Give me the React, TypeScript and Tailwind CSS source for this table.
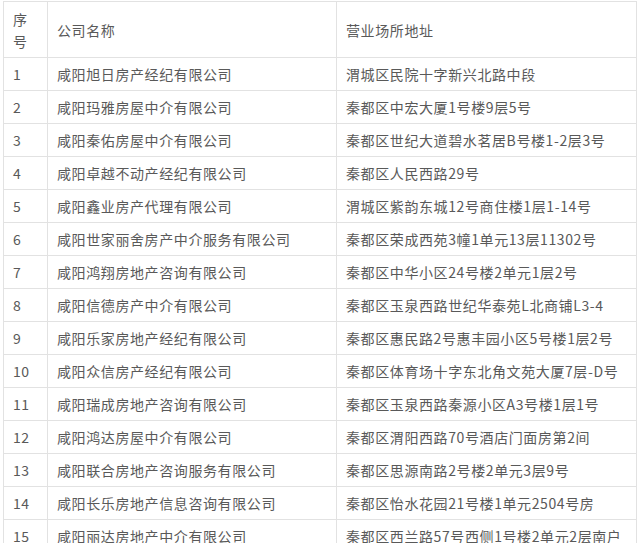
import React from "react";

const rows: [string, string][] = [
  ["咸阳旭日房产经纪有限公司", "渭城区民院十字新兴北路中段"],
  ["咸阳玛雅房屋中介有限公司", "秦都区中宏大厦1号楼9层5号"],
  ["咸阳秦佑房屋中介有限公司", "秦都区世纪大道碧水茗居B号楼1-2层3号"],
  ["咸阳卓越不动产经纪有限公司", "秦都区人民西路29号"],
  ["咸阳鑫业房产代理有限公司", "渭城区紫韵东城12号商住楼1层1-14号"],
  ["咸阳世家丽舍房产中介服务有限公司", "秦都区荣成西苑3幢1单元13层11302号"],
  ["咸阳鸿翔房地产咨询有限公司", "秦都区中华小区24号楼2单元1层2号"],
  ["咸阳信德房产中介有限公司", "秦都区玉泉西路世纪华泰苑L北商铺L3-4"],
  ["咸阳乐家房地产经纪有限公司", "秦都区惠民路2号惠丰园小区5号楼1层2号"],
  ["咸阳众信房产经纪有限公司", "秦都区体育场十字东北角文苑大厦7层-D号"],
  ["咸阳瑞成房地产咨询有限公司", "秦都区玉泉西路秦源小区A3号楼1层1号"],
  ["咸阳鸿达房屋中介有限公司", "秦都区渭阳西路70号酒店门面房第2间"],
  ["咸阳联合房地产咨询服务有限公司", "秦都区思源南路2号楼2单元3层9号"],
  ["咸阳长乐房地产信息咨询有限公司", "秦都区怡水花园21号楼1单元2504号房"],
  ["咸阳丽达房地产中介有限公司", "秦都区西兰路57号西侧1号楼2单元2层南户"],
];

const cell = "border border-[#e2e2e2] px-[9px] py-[5px] align-middle";

export default function App() {
  return (
    <div className="w-[640px] h-[548px] bg-white">
      <div className="h-[543px] overflow-hidden pt-[1px] pl-[3px]">
        <table
          className="border-collapse table-fixed w-[633px] text-[14px] leading-[22px] tracking-[0.6px] text-[#595959]"
          style={{ fontFamily: '"Noto Sans CJK SC", "Noto Sans", sans-serif' }}
        >
          <colgroup>
            <col className="w-[44px]" />
            <col className="w-[289px]" />
            <col className="w-[300px]" />
          </colgroup>
          <thead>
            <tr className="h-[56px]">
              <th className={`${cell} font-normal text-left`}>
                序<br />号
              </th>
              <th className={`${cell} font-normal text-left`}>公司名称</th>
              <th className={`${cell} font-normal text-left`}>营业场所地址</th>
            </tr>
          </thead>
          <tbody>
            {rows.map(([name, addr], i) => (
              <tr key={i} className="h-[33px]">
                <td className={cell}>{i + 1}</td>
                <td className={`${cell} whitespace-nowrap`}>{name}</td>
                <td className={`${cell} whitespace-nowrap`}>{addr}</td>
              </tr>
            ))}
          </tbody>
        </table>
      </div>
    </div>
  );
}
